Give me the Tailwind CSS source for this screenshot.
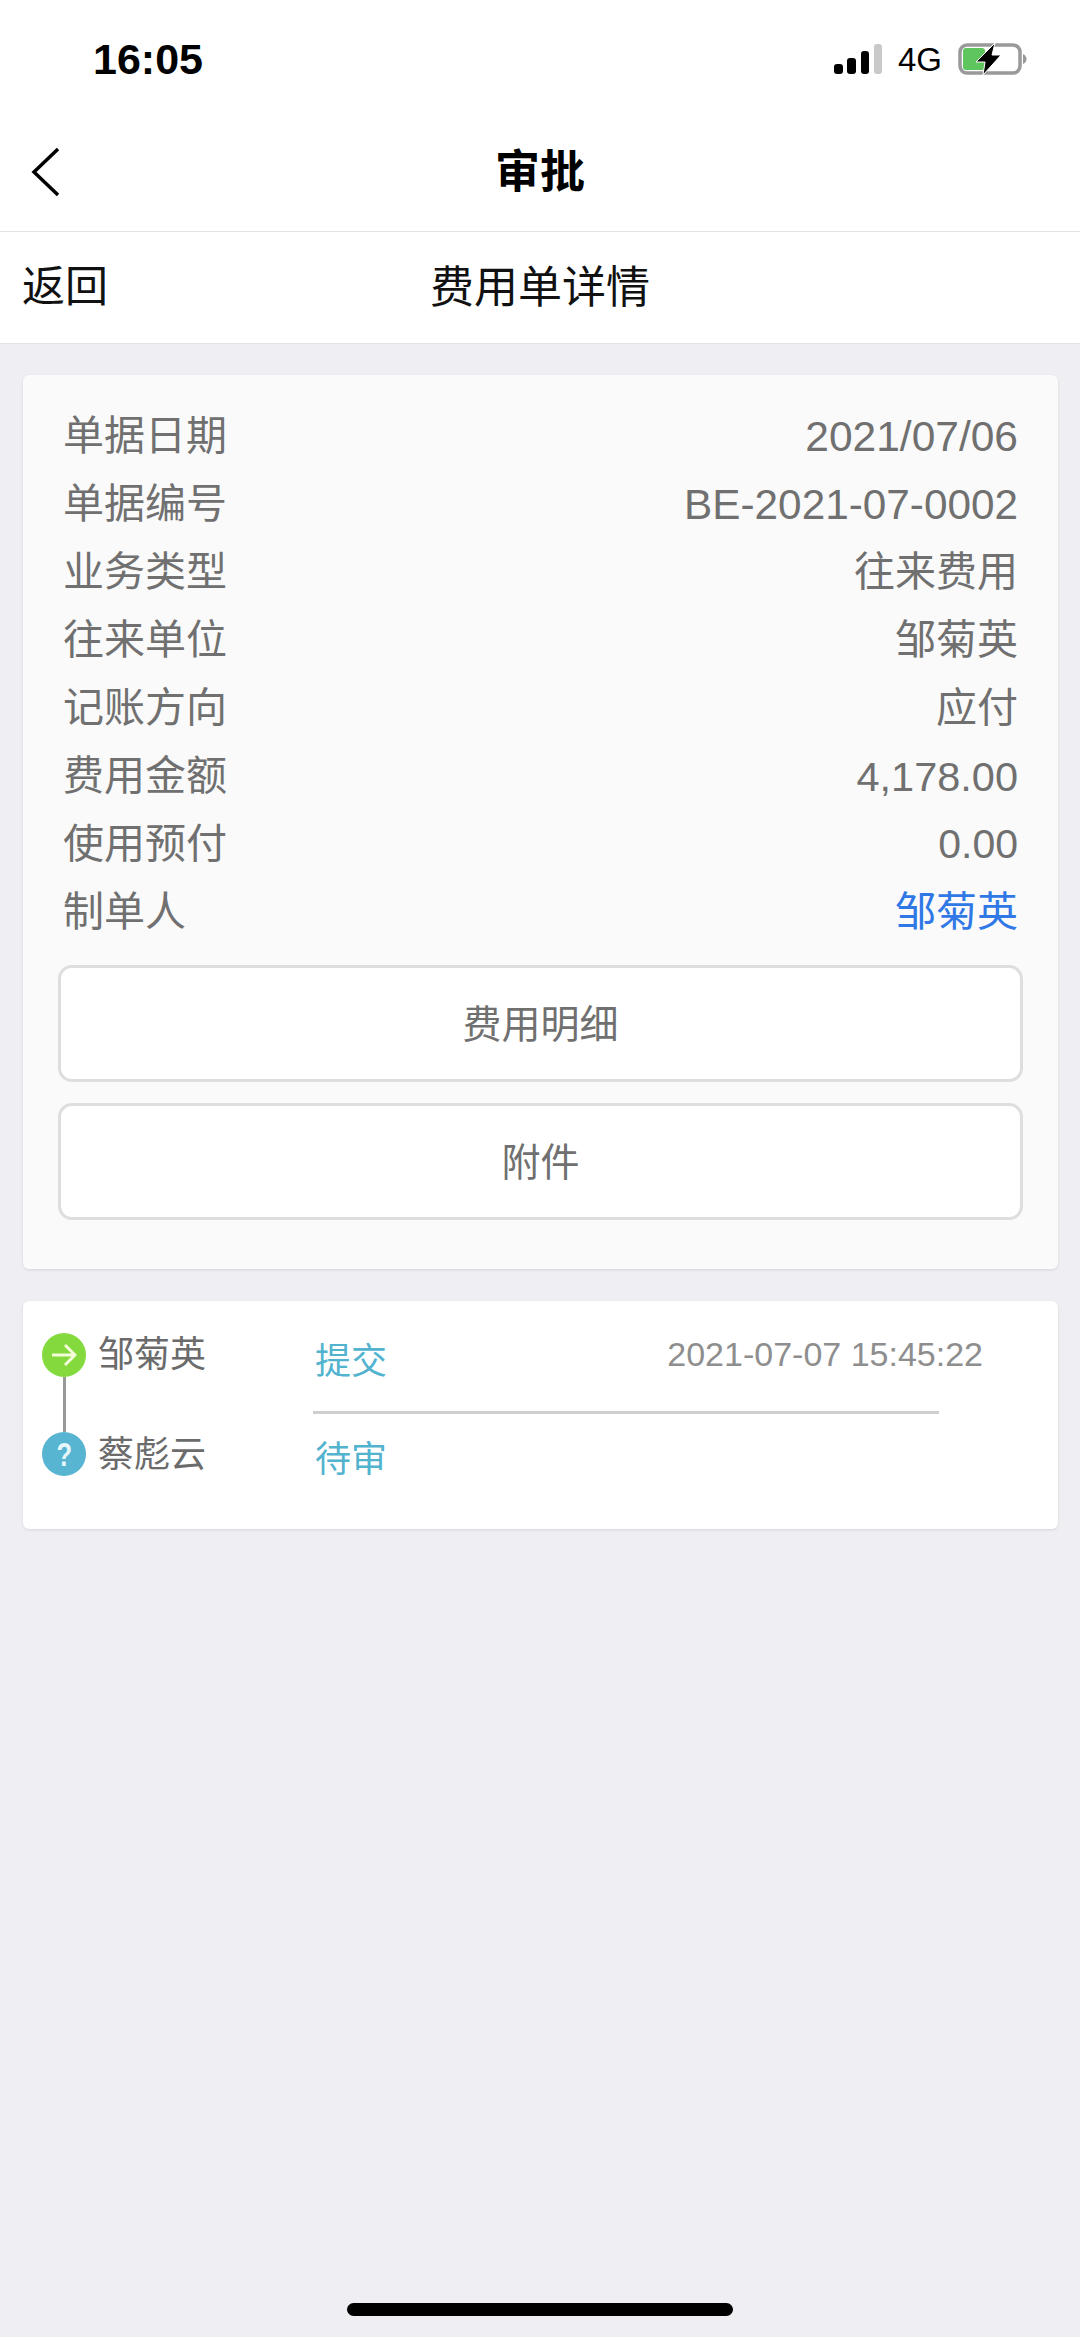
<!DOCTYPE html>
<html lang="zh-CN">
<head>
  <meta charset="UTF-8" />
  <meta name="viewport" content="width=device-width, initial-scale=1.0" />
  <title>审批</title>
  <script src="https://cdn.jsdelivr.net/npm/@tailwindcss/browser@4"></script>
</head>
<body class="bg-[#eeeef3] font-['Liberation_Sans','Noto_Sans_CJK_SC',sans-serif]">
  <div class="relative w-[1080px] h-[2337px] overflow-hidden flex flex-col">

    <!-- status bar -->
    <div class="h-[100px] bg-white flex items-center justify-between pl-[93px] pr-[53px] pt-[18px] shrink-0">
      <span class="text-[43px] font-bold text-black leading-none">16:05</span>
      <div class="flex items-center gap-[16px]">
        <svg width="48" height="30" viewBox="0 0 48 30">
          <rect x="0" y="20" width="9" height="10" rx="3" fill="#000" />
          <rect x="13" y="14" width="9" height="16" rx="3" fill="#000" />
          <rect x="27" y="7" width="8" height="23" rx="3" fill="#000" />
          <rect x="40" y="0" width="8" height="30" rx="3" fill="#c9c9c9" />
        </svg>
        <span class="text-[33px] text-black leading-none">4G</span>
        <svg width="69" height="34" viewBox="0 0 69 34">
          <rect x="2" y="3" width="60" height="28" rx="7" fill="#fff" stroke="#999" stroke-width="3.500" />
          <rect x="5" y="6" width="22" height="22" rx="3" fill="#5fc65f" />
          <path d="M65 12c2.500 1 3.500 3 3.500 5s-1 4-3.500 5z" fill="#999" />
          <path d="M37 1 L18 20 H27 L25 33 L43 13 H34 Z" fill="#000" stroke="#fff" stroke-width="1" />
        </svg>
      </div>
    </div>

    <!-- app title bar -->
    <div class="relative h-[131px] bg-white flex items-center justify-center pt-[14px] shrink-0">
      <svg class="absolute left-[31px] top-[47px]" width="30" height="50" viewBox="0 0 30 50" fill="none">
        <path d="M27 2 L3 25 L27 48" stroke="#000" stroke-width="3.500" />
      </svg>
      <span class="text-[45px] font-bold text-black leading-none">审批</span>
    </div>

    <!-- page header -->
    <div class="relative h-[113px] bg-white border-y border-y-[#e4e4e6] flex items-center justify-center shrink-0">
      <span class="absolute left-[22px] top-[30px] text-[43px] text-[#111] leading-[50px]">返回</span>
      <span class="text-[44px] text-[#111] leading-none">费用单详情</span>
    </div>

    <div class="pl-[23px] pr-[22px] pt-[31px] flex flex-col gap-[32px] grow">
      <!-- expense card -->
      <section class="h-[894px] bg-[#fafafa] rounded-[6px] shadow-[0_1px_3px_rgba(0,0,0,0.1)] pt-[28px] px-[35px]">
        <div class="flex flex-col text-[41px] text-[#707070] px-[5px]">
          <div class="h-[68px] flex items-center justify-between"><span>单据日期</span><span class="text-[42.5px]">2021/07/06</span></div>
          <div class="h-[68px] flex items-center justify-between"><span>单据编号</span><span class="text-[42.3px]">BE-2021-07-0002</span></div>
          <div class="h-[68px] flex items-center justify-between"><span>业务类型</span><span>往来费用</span></div>
          <div class="h-[68px] flex items-center justify-between"><span>往来单位</span><span>邹菊英</span></div>
          <div class="h-[68px] flex items-center justify-between"><span>记账方向</span><span>应付</span></div>
          <div class="h-[68px] flex items-center justify-between"><span>费用金额</span><span class="text-[41.500px]">4,178.00</span></div>
          <div class="h-[68px] flex items-center justify-between"><span>使用预付</span><span>0.00</span></div>
          <div class="h-[68px] flex items-center justify-between"><span>制单人</span><span class="text-[#2f78e6]">邹菊英</span></div>
        </div>
        <div class="mt-[18px] flex flex-col gap-[21px]">
          <button class="h-[117px] pt-[4px] bg-white border-[3px] border-[#dedede] rounded-[14px] text-[39px] text-[#707070]">费用明细</button>
          <button class="h-[117px] pt-[4px] bg-white border-[3px] border-[#dedede] rounded-[14px] text-[39px] text-[#707070]">附件</button>
        </div>
      </section>

      <!-- approval flow card -->
      <section class="relative h-[228px] bg-white rounded-[6px] shadow-[0_1px_3px_rgba(0,0,0,0.1)]">
        <div class="absolute left-[19px] top-[32px] flex flex-col items-center">
          <div class="w-[44px] h-[44px] rounded-full bg-[#84d93c] flex items-center justify-center">
            <svg width="26" height="22" viewBox="0 0 26 22" fill="none" stroke="#f4fbd9" stroke-width="3">
              <path d="M1 11 H24 M14 1 L24 11 L14 21" />
            </svg>
          </div>
          <div class="w-[3px] h-[55px] bg-[#999]"></div>
          <div class="w-[44px] h-[44px] rounded-full bg-[#57b5d1] flex items-center justify-center">
            <span class="text-[34px] leading-none font-bold text-[#e6f6fa] scale-x-75">?</span>
          </div>
        </div>
        <div class="absolute left-[75px] top-[25px] flex flex-col gap-[42px] text-[36px] leading-[58px] text-[#6b6b6b]">
          <span>邹菊英</span>
          <span>蔡彪云</span>
        </div>
        <div class="absolute left-[290px] top-[32px] w-[626px]">
          <div class="h-[81px] border-b-[3px] border-b-[#cfcfcf] flex justify-between">
            <span class="text-[36px] leading-[58px] text-[#52b3cf] pl-[2px]">提交</span>
            <span class="text-[34px] leading-[50px] text-[#8e8e8e] mr-[-44px] -mt-[4px]">2021-07-07 15:45:22</span>
          </div>
          <div class="pt-[17px] pl-[2px] text-[36px] leading-[58px] text-[#52b3cf]">待审</div>
        </div>
      </section>
    </div>

    <!-- home indicator -->
    <div class="absolute left-[347px] bottom-[21px] w-[386px] h-[13px] rounded-full bg-black"></div>
  </div>
</body>
</html>
